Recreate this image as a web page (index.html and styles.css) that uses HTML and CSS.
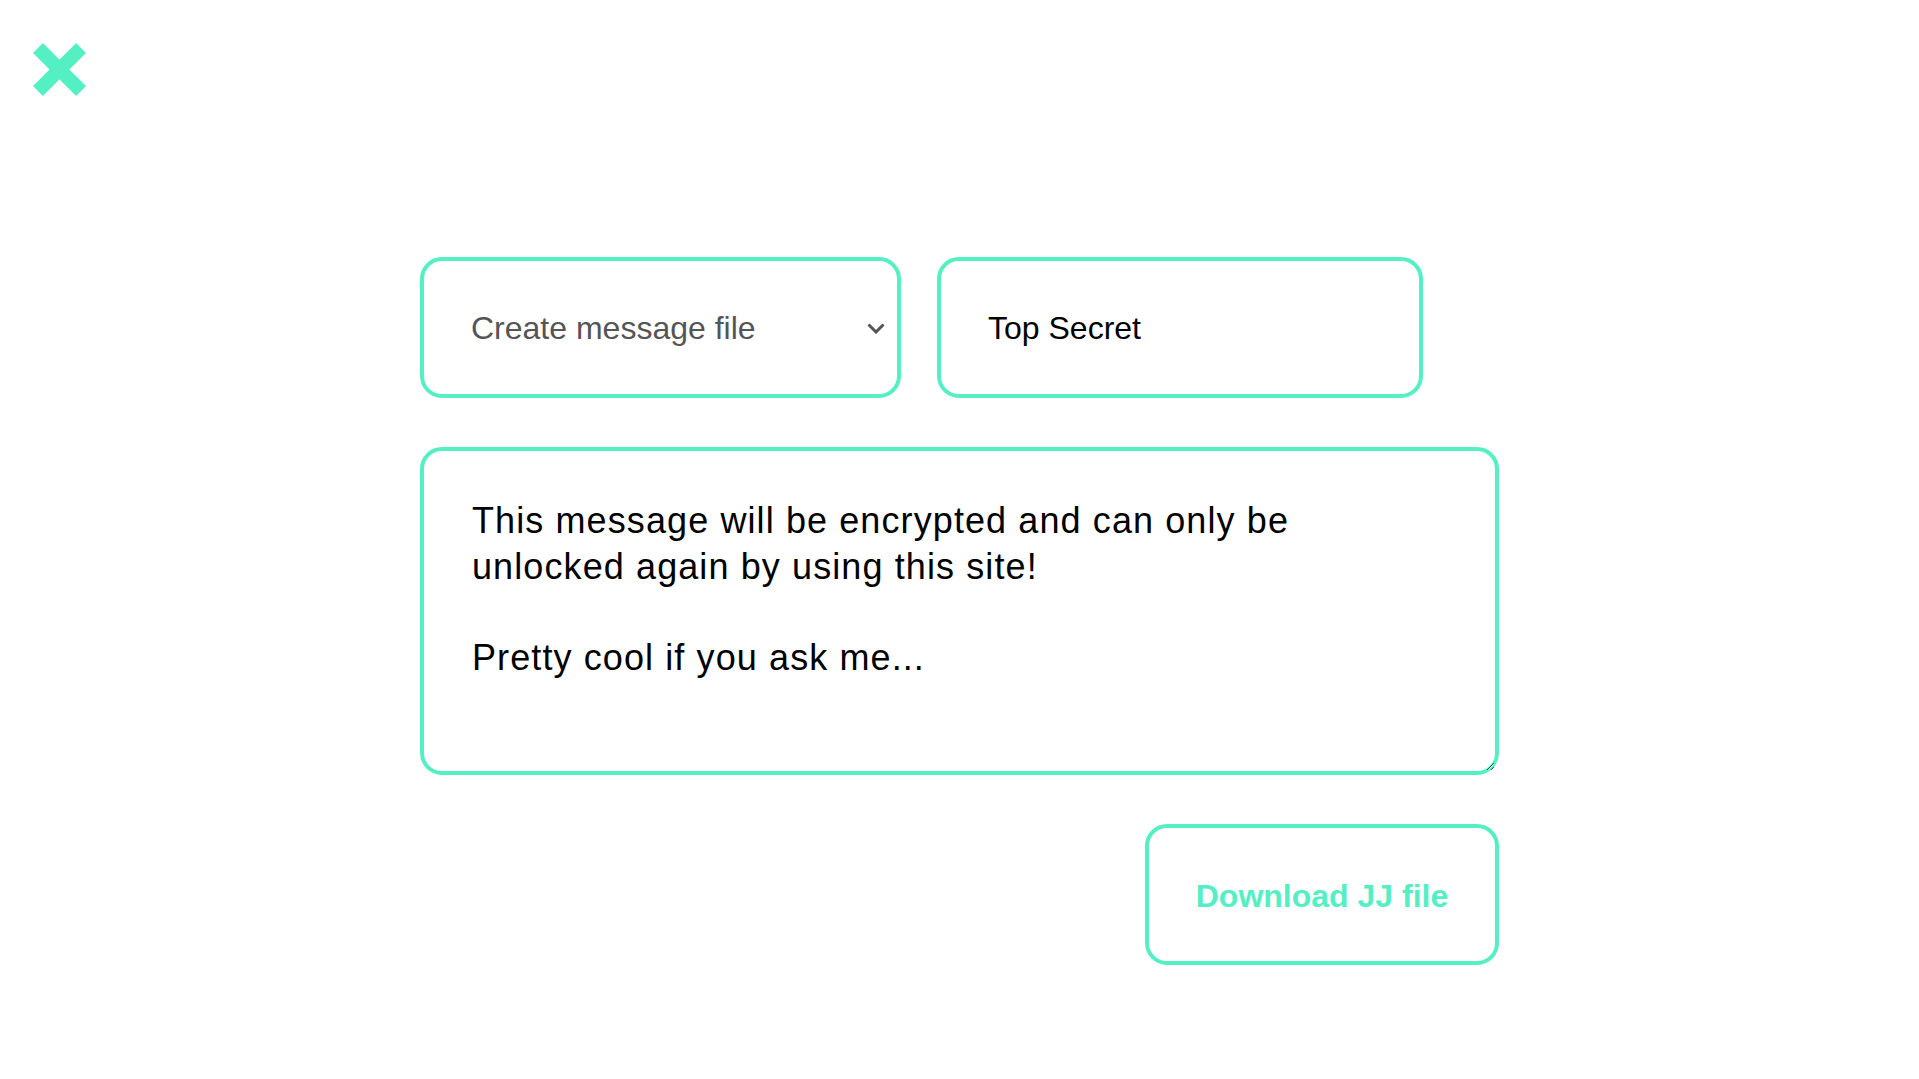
FILE: index.html
```html
<!DOCTYPE html>
<html lang="en">
<head>
<meta charset="utf-8">
<title>JJ</title>
<link rel="stylesheet" href="styles.css">
</head>
<body>
<header class="header">
  <svg class="logo" width="53" height="53" viewBox="0 0 53 53" aria-label="close">
    <path d="M4.95 4.95 L48.05 48.05 M48.05 4.95 L4.95 48.05" stroke="#55efc4" stroke-width="14" stroke-linecap="butt" fill="none"/>
  </svg>
</header>
<main class="main">
  <div class="row">
    <div class="select-wrap">
      <select class="select">
        <option>Create message file</option>
        <option>Open message file</option>
      </select>
      <svg class="chevron" width="18" height="11" viewBox="0 0 18 11"><path d="M1.5 1.5 L9 9 L16.5 1.5" stroke="#555" stroke-width="3" fill="none"/></svg>
    </div>
    <input class="input" type="text" value="Top Secret">
  </div>
  <textarea class="message">This message will be encrypted and can only be unlocked again by using this site!

Pretty cool if you ask me...</textarea>
  <div class="actions">
    <button class="button">Download JJ file</button>
  </div>
</main>
</body>
</html>
```

FILE: styles.css
```css
html, body {
  margin: 0;
  padding: 0;
  background: #ffffff;
  font-family: "Liberation Sans", Arial, sans-serif;
}

.header {
  padding: 43px 0 0 33px;
  height: 53px;
}

.logo {
  display: block;
}

.main {
  width: 1079px;
  margin: 161px auto 0;
}

.row {
  display: flex;
  gap: 36px;
}

.select-wrap {
  position: relative;
  width: 481px;
}

.select {
  appearance: none;
  -webkit-appearance: none;
  box-sizing: border-box;
  width: 481px;
  height: 141px;
  border: 4px solid #55efc4;
  border-radius: 22px;
  background: #ffffff;
  padding: 0 48px 0 47px;
  font-family: "Liberation Sans", Arial, sans-serif;
  font-size: 32px;
  color: #555555;
  outline: none;
}

.chevron {
  position: absolute;
  right: 16px;
  top: 66px;
  pointer-events: none;
}

.input {
  box-sizing: border-box;
  width: 486px;
  height: 141px;
  border: 4px solid #55efc4;
  border-radius: 22px;
  padding: 2px 47px 0;
  font-family: "Liberation Sans", Arial, sans-serif;
  font-size: 32px;
  color: #000000;
  outline: none;
  background: #ffffff;
}

.message {
  display: block;
  box-sizing: border-box;
  width: 1079px;
  height: 328px;
  margin-top: 49px;
  border: 4px solid #55efc4;
  border-radius: 22px;
  padding: 47px 48px 46px;
  font-family: "Liberation Sans", Arial, sans-serif;
  font-size: 36px;
  letter-spacing: 1.1px;
  line-height: 45.5px;
  color: #000000;
  outline: none;
  background: #ffffff;
}

.actions {
  display: flex;
  justify-content: flex-end;
  margin-top: 49px;
}

.button {
  box-sizing: border-box;
  width: 354px;
  height: 141px;
  border: 4px solid #55efc4;
  border-radius: 22px;
  background: #ffffff;
  color: #55efc4;
  font-family: "Liberation Sans", Arial, sans-serif;
  font-size: 32px;
  font-weight: bold;
  padding: 3px 0 0;
  cursor: pointer;
}
```
